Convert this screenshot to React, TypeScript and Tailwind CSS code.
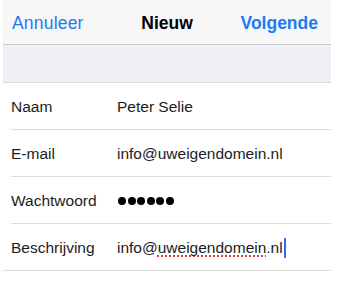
import React from "react";

const rows = [
  { label: "Naam", value: "Peter Selie" },
  { label: "E-mail", value: "info@uweigendomein.nl" },
  { label: "Wachtwoord", value: "password" },
  { label: "Beschrijving", value: "description" },
];

export default function App() {
  return (
    <div className="w-[337px] h-[290px] bg-white font-['Liberation_Sans',Arial,sans-serif]">
      <div className="ml-[3px] w-[328px]">
        {/* nav bar */}
        <div className="h-[45px] bg-[#f7f7f7] border-b border-[#c8c7cc] flex items-center justify-between pl-[9px] pr-[13px] pt-[2px] text-[17.5px]">
          <span className="text-[#1a7cf5] tracking-[0.2px]">Annuleer</span>
          <span className="font-bold text-black ml-[10px]">Nieuw</span>
          <span className="font-bold text-[#1a7cf5]">Volgende</span>
        </div>
        <div className="h-[38px] bg-[#efeff4] border-b border-[#dcdce0]" />
        <div className="bg-white">
          {rows.map((row, i) => (
            <div key={row.label} className={i < rows.length - 1 ? "pl-[8px]" : ""}>
              <div
                className={
                  "h-[47px] flex items-center border-b pt-[1px] " +
                  (i < rows.length - 1 ? "border-[#dedede]" : "border-[#dedede] pl-[8px]")
                }
              >
                <span className="w-[106px] text-[15.5px] text-[#1c1c1c]">{row.label}</span>
                {row.value === "password" ? (
                  <span className="flex gap-[1.5px] items-center ml-[1px]">
                    {[0, 1, 2, 3, 4, 5].map((d) => (
                      <span key={d} className="w-[8px] h-[8px] rounded-full bg-black" />
                    ))}
                  </span>
                ) : row.value === "description" ? (
                  <span className="text-[15.5px] text-[#1c1c1c] flex items-center">
                    info@
                    <span className="underline decoration-dotted decoration-[#e53935] decoration-2 underline-offset-[3px] [text-decoration-skip-ink:none]">
                      uweigendomein
                    </span>
                    .nl
                    <span className="inline-block w-[2px] h-[20px] bg-[#2d6cf0] ml-[1px]" />
                  </span>
                ) : (
                  <span className="text-[15.5px] text-[#1c1c1c]">{row.value}</span>
                )}
              </div>
            </div>
          ))}
        </div>
      </div>
    </div>
  );
}
